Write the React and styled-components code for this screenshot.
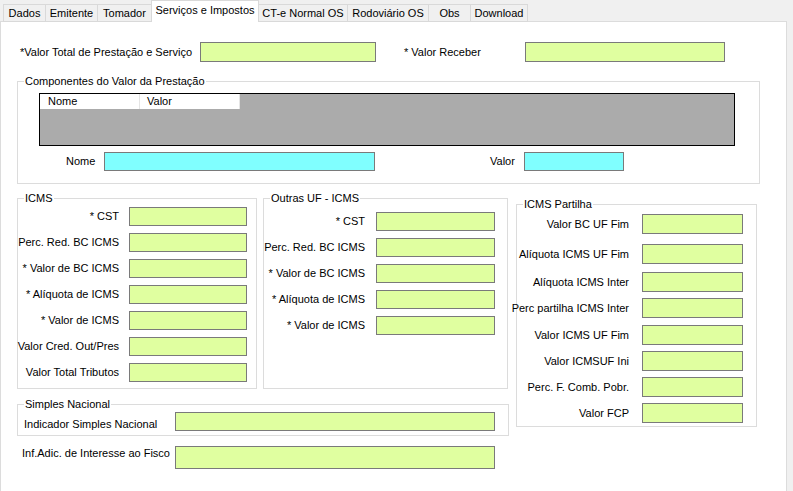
import React from "react";
import styled, { createGlobalStyle } from "styled-components";

const Global = createGlobalStyle`
  html, body { margin: 0; padding: 0; background: #f0f0f0; }
  body { font-family: "Liberation Sans", Arial, sans-serif; font-size: 11px; color: #000; }
  * { box-sizing: border-box; }
`;

const Root = styled.div`
  width: 793px;
  height: 491px;
  overflow: hidden;
  background: #f0f0f0;
`;

const TabStrip = styled.div`
  display: flex;
  align-items: flex-end;
  height: 22px;
  padding-left: 3px;
  position: relative;
  z-index: 1;
`;

const Tab = styled.div`
  width: ${(p) => p.$w}px;
  height: ${(p) => (p.$active ? 22 : 18)}px;
  margin-left: -1px;
  border: 1px solid #d9d9d9;
  border-bottom: ${(p) => (p.$active ? "none" : "1px solid #d9d9d9")};
  background: ${(p) => (p.$active ? "#ffffff" : "#f0f0f0")};
  display: flex;
  align-items: ${(p) => (p.$active ? "flex-start" : "center")};
  justify-content: center;
  padding-top: ${(p) => (p.$active ? "3px" : "0")};
  white-space: nowrap;
  font-size: 11px;
  &:first-child { margin-left: 0; }
`;

const Panel = styled.div`
  margin-top: -1px;
  width: 787px;
  height: 471px;
  background: #ffffff;
  border: 1px solid #dcdcdc;
  border-bottom: none;
`;

const TopRow = styled.div`
  display: flex;
  align-items: center;
  margin-top: 20px;
  padding-left: 19px;
`;

const Label = styled.div`
  width: ${(p) => p.$w}px;
  margin-left: ${(p) => p.$ml || 0}px;
  padding-left: ${(p) => p.$pl || 0}px;
  padding-top: ${(p) => p.$pt || 0}px;
  white-space: nowrap;
  line-height: 13px;
  flex-shrink: 0;
`;

const RLabel = styled.div`
  width: ${(p) => p.$w}px;
  display: flex;
  justify-content: flex-end;
  white-space: nowrap;
  line-height: 13px;
  flex-shrink: 0;
`;

const Field = styled.input.attrs({ readOnly: true, type: "text" })`
  display: block;
  width: ${(p) => p.$w}px;
  height: ${(p) => p.$h || 19}px;
  margin: 0;
  padding: 0;
  border: 1px solid #7a7a7a;
  background: ${(p) => (p.$cyan ? "#80ffff" : "#e0ffa0")};
  outline: none;
  flex-shrink: 0;
`;

const Group = styled.div`
  width: ${(p) => p.$w}px;
  margin-top: ${(p) => p.$mt || 0}px;
  margin-left: ${(p) => p.$ml || 0}px;
  border: 1px solid #dcdcdc;
  padding-bottom: ${(p) => p.$pb || 0}px;
  background: #ffffff;
`;

const GroupTitle = styled.div`
  width: fit-content;
  margin: -7px 0 0 6px;
  padding: 0 1px;
  line-height: 13px;
  background: #ffffff;
  white-space: nowrap;
`;

const DataGrid = styled.div`
  width: 696px;
  height: 53px;
  margin: 5px 0 0 21px;
  border: 1px solid #000;
  background: #ababab;
`;

const GridHeader = styled.div`
  display: grid;
  grid-template-columns: 100px 100px;
  width: 200px;
  height: 15px;
  background: #ffffff;
`;

const HeaderCell = styled.div`
  padding-left: ${(p) => p.$pl}px;
  line-height: 15px;
  border-right: 1px solid #e5e5e5;
`;

const CompRow = styled.div`
  display: flex;
  align-items: center;
  margin-top: 6px;
  padding-left: 48px;
`;

const Lower = styled.div`
  display: flex;
  align-items: flex-start;
  margin: 14px 0 0 16px;
`;

const LeftCol = styled.div`
  width: 492px;
  display: flex;
  flex-direction: column;
`;

const BoxRow = styled.div`
  display: flex;
  align-items: stretch;
  gap: 6px;
`;

const FormGrid = styled.div`
  display: grid;
  grid-template-columns: ${(p) => p.$lw}px ${(p) => p.$iw}px;
  column-gap: ${(p) => p.$cg}px;
  row-gap: 7px;
  align-items: center;
  margin-top: ${(p) => p.$mt}px;
`;

const StackRow = styled.div`
  display: flex;
  align-items: center;
  gap: 13px;
  margin-top: ${(p) => p.$mt}px;
`;

const FlatRow = styled.div`
  display: flex;
  align-items: ${(p) => p.$align || "center"};
  margin-top: ${(p) => p.$mt}px;
`;

const tabs = [
  ["Dados", 43],
  ["Emitente", 53],
  ["Tomador", 55],
  ["Serviços e Impostos", 108, true],
  ["CT-e Normal OS", 90],
  ["Rodoviário OS", 82],
  ["Obs", 43],
  ["Download", 58],
];

const icms = [
  "* CST",
  "Perc. Red. BC ICMS",
  "* Valor de BC ICMS",
  "* Alíquota de ICMS",
  "* Valor de ICMS",
  "Valor Cred. Out/Pres",
  "Valor Total Tributos",
];

const outras = [
  "* CST",
  "Perc. Red. BC ICMS",
  "* Valor de BC ICMS",
  "* Alíquota de ICMS",
  "* Valor de ICMS",
];

const partilha = [
  ["Valor BC UF Fim", 3],
  ["Alíquota ICMS UF Fim", 10],
  ["Alíquota ICMS Inter", 8],
  ["Perc partilha ICMS Inter", 6],
  ["Valor ICMS UF Fim", 7],
  ["Valor ICMSUF Ini", 6],
  ["Perc. F. Comb. Pobr.", 6],
  ["Valor FCP", 6],
];

export default function App() {
  return (
    <Root>
      <Global />
      <TabStrip>
        {tabs.map(([t, w, a]) => (
          <Tab key={t} $w={w} $active={a}>
            {t}
          </Tab>
        ))}
      </TabStrip>
      <Panel>
        <TopRow>
          <Label $w={180}>*Valor Total de Prestação e Serviço</Label>
          <Field $w={176} $h={20} />
          <Label $w={121} $ml={28}>* Valor Receber</Label>
          <Field $w={200} $h={20} />
        </TopRow>

        <Group $w={743} $mt={19} $ml={16} $pb={12}>
          <GroupTitle>Componentes do Valor da Prestação</GroupTitle>
          <DataGrid>
            <GridHeader>
              <HeaderCell $pl={8}>Nome</HeaderCell>
              <HeaderCell $pl={7}>Valor</HeaderCell>
            </GridHeader>
          </DataGrid>
          <CompRow>
            <Label $w={38}>Nome</Label>
            <Field $w={271} $cyan />
            <Label $w={34} $ml={115}>Valor</Label>
            <Field $w={100} $cyan />
          </CompRow>
        </Group>

        <Lower>
          <LeftCol>
            <BoxRow>
              <Group $w={240} $pb={6}>
                <GroupTitle>ICMS</GroupTitle>
                <FormGrid $lw={101} $iw={118} $cg={10} $mt={2}>
                  {icms.map((l) => (
                    <React.Fragment key={l}>
                      <RLabel $w={101}>{l}</RLabel>
                      <Field $w={118} />
                    </React.Fragment>
                  ))}
                </FormGrid>
              </Group>
              <Group $w={245} $pb={6}>
                <GroupTitle>Outras UF - ICMS</GroupTitle>
                <FormGrid $lw={101} $iw={119} $cg={11} $mt={7}>
                  {outras.map((l) => (
                    <React.Fragment key={l}>
                      <RLabel $w={101}>{l}</RLabel>
                      <Field $w={119} />
                    </React.Fragment>
                  ))}
                </FormGrid>
              </Group>
            </BoxRow>

            <Group $w={492} $mt={15} $pb={4}>
              <GroupTitle>Simples Nacional</GroupTitle>
              <FlatRow $mt={1} $align="flex-end">
                <Label $w={157} $pl={6}>Indicador Simples Nacional</Label>
                <Field $w={320} />
              </FlatRow>
            </Group>

            <FlatRow $mt={10} $align="flex-start">
              <Label $w={158} $pl={5} $pt={1}>
                Inf.Adic. de Interesse ao Fisco
              </Label>
              <Field $w={320} $h={23} />
            </FlatRow>
          </LeftCol>

          <Group $w={241} $mt={6} $ml={7} $pb={3}>
            <GroupTitle>ICMS Partilha</GroupTitle>
            {partilha.map(([l, mt]) => (
              <StackRow key={l} $mt={mt}>
                <RLabel $w={112}>{l}</RLabel>
                <Field $w={101} $h={20} />
              </StackRow>
            ))}
          </Group>
        </Lower>
      </Panel>
    </Root>
  );
}
